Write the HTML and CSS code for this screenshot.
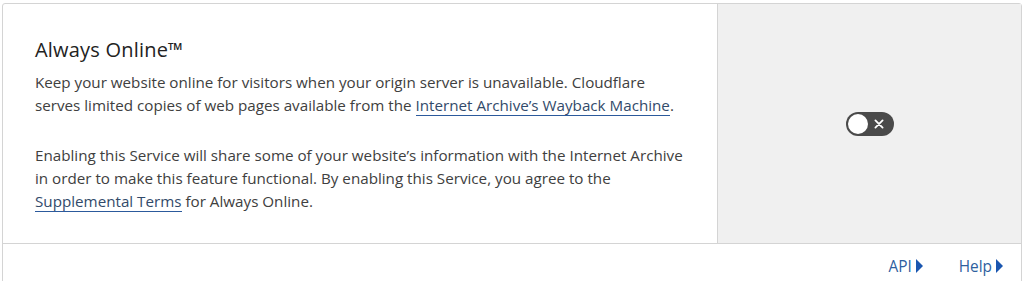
FILE: index.html
```html
<!DOCTYPE html>
<html lang="en">

<head>
    <meta charset="UTF-8">
    <meta name="viewport" content="width=device-width, initial-scale=1.0">
    <title>Always Online</title>
    <link rel="stylesheet" href="styles.css">
</head>

<body>
    <div class="card">
        <div class="card-main">
            <div class="card-content">
                <h3 class="card-title">Always Online&trade;</h3>
                <p>Keep your website online for visitors when your origin server is unavailable. Cloudflare<br>
                    serves limited copies of web pages available from the <a href="#">Internet Archive’s Wayback Machine</a>.</p>
                <p>Enabling this Service will share some of your website’s information with the Internet Archive<br>
                    in order to make this feature functional. By enabling this Service, you agree to the<br>
                    <a href="#">Supplemental Terms</a> for Always Online.</p>
            </div>
            <div class="card-control">
                <button class="toggle" aria-label="Toggle Always Online">
                    <span class="toggle-knob"></span>
                    <svg class="toggle-x" viewBox="0 0 10 10">
                        <path d="M2,2 L8,8 M8,2 L2,8" stroke="#ffffff" stroke-width="1.5" stroke-linecap="round" />
                    </svg>
                </button>
            </div>
        </div>
        <div class="card-footer">
            <a href="#" class="footer-link">API<span class="caret"></span></a>
            <a href="#" class="footer-link">Help<span class="caret"></span></a>
        </div>
    </div>
</body>

</html>
```

FILE: styles.css
```css
* {
    margin: 0;
    padding: 0;
    box-sizing: border-box;
}

body {
    background-color: #ffffff;
    color: #404040;
    font-family: 'Open Sans', 'Noto Sans', sans-serif;
    padding: 3px 2px 0 2px;
}

.card {
    border: 1px solid #d4d4d4;
    border-radius: 3px;
    background: #ffffff;
}

.card-main {
    display: flex;
    height: 240px;
    border-bottom: 1px solid #d4d4d4;
}

.card-content {
    width: 715px;
    padding: 33px 20px 0 32px;
    border-right: 1px solid #d4d4d4;
}

.card-title {
    font-size: 20px;
    font-weight: 400;
    color: #222222;
    line-height: 26px;
    margin-bottom: 8px;
    letter-spacing: 0.2px;
}

.card-content p {
    font-size: 15.2px;
    line-height: 23px;
    color: #404040;
    margin-bottom: 27px;
    white-space: nowrap;
}

.card-content a {
    color: #324a6a;
    text-decoration: none;
    border-bottom: 1px solid #2c5a9c;
}

.card-control {
    flex: 1;
    background-color: #f0f0f0;
    display: flex;
    align-items: center;
    justify-content: center;
}

.toggle {
    width: 48px;
    height: 24px;
    border-radius: 12px;
    border: none;
    background-color: #4a4a4a;
    display: flex;
    align-items: center;
    padding: 2px;
    cursor: pointer;
}

.toggle-knob {
    width: 20px;
    height: 20px;
    border-radius: 50%;
    background-color: #ffffff;
}

.toggle-x {
    width: 12px;
    height: 12px;
    margin-left: 5px;
}

.card-footer {
    height: 44px;
    display: flex;
    justify-content: flex-end;
    align-items: center;
    gap: 36px;
    padding-right: 18px;
}

.footer-link {
    font-size: 15.4px;
    color: #2f5f9f;
    text-decoration: none;
    display: flex;
    align-items: center;
}

.caret {
    width: 0;
    height: 0;
    border-top: 7px solid transparent;
    border-bottom: 7px solid transparent;
    border-left: 7px solid #1a56b0;
    margin-left: 4px;
}
```
